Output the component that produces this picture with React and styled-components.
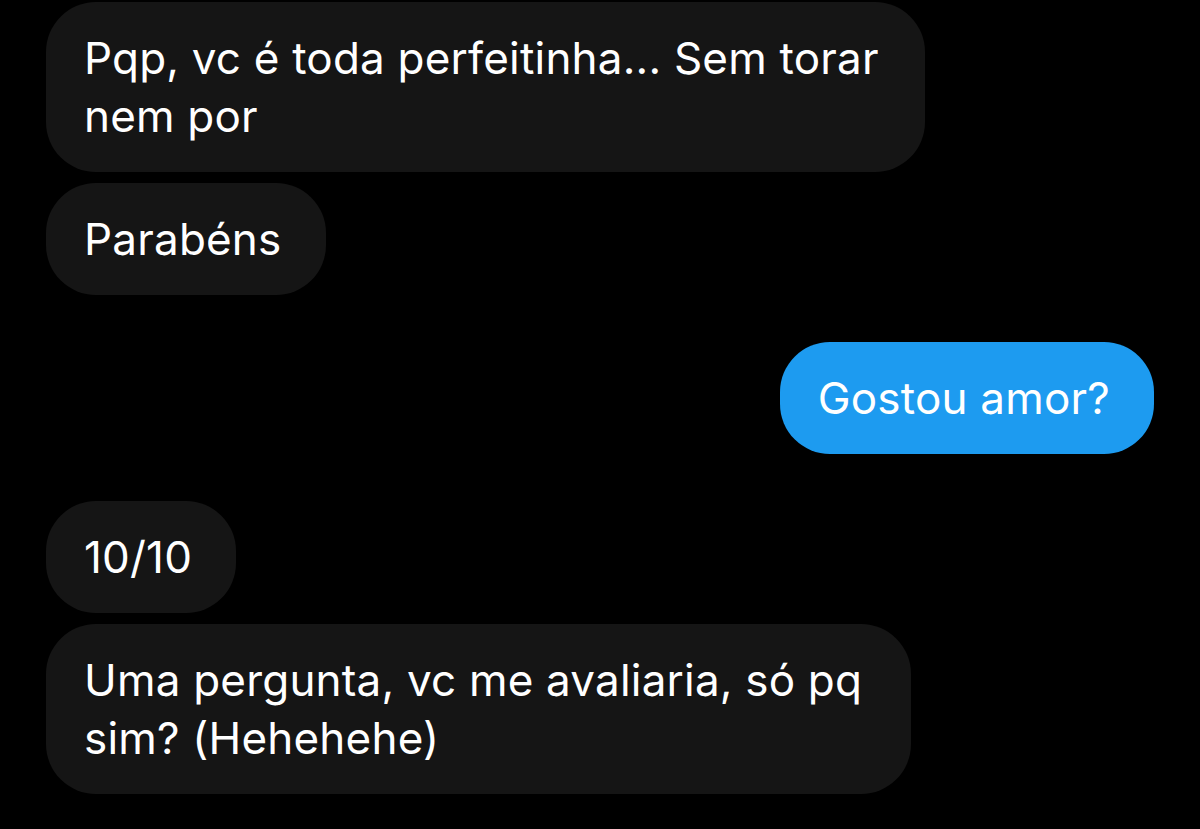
import React from 'react';
import styled, { createGlobalStyle } from 'styled-components';

const GlobalStyle = createGlobalStyle`
  html, body {
    margin: 0;
    padding: 0;
    background: #000;
  }
  body {
    font-family: Inter, 'Liberation Sans', sans-serif;
    -webkit-font-smoothing: antialiased;
  }
`;

const Thread = styled.div`
  display: flex;
  flex-direction: column;
  width: 1200px;
  height: 829px;
  box-sizing: border-box;
  padding: 2px 46px 0 46px;
  background: #000;
  overflow: hidden;
`;

const Group = styled.div`
  display: flex;
  flex-direction: column;
  align-items: ${(p) => (p.$mine ? 'flex-end' : 'flex-start')};
  gap: 11px;
  margin-top: ${(p) => p.$top || 0}px;
`;

const Bubble = styled.div`
  box-sizing: border-box;
  width: ${(p) => (p.$width ? `${p.$width}px` : 'fit-content')};
  padding: 27px 44px 27px 38px;
  border-radius: 50px;
  background: ${(p) => (p.$mine ? '#1d9bf0' : '#151515')};
  color: #fff;
  font-size: 44px;
  line-height: 58px;
  letter-spacing: 0.2px;
  white-space: nowrap;
`;

const messages = [
  {
    mine: false,
    top: 0,
    items: [
      { width: 879, lines: ['Pqp, vc é toda perfeitinha... Sem torar', 'nem por'] },
      { lines: ['Parabéns'] },
    ],
  },
  { mine: true, top: 47, items: [{ lines: ['Gostou amor?'] }] },
  {
    mine: false,
    top: 47,
    items: [
      { lines: ['10/10'] },
      { width: 865, lines: ['Uma pergunta, vc me avaliaria, só pq', 'sim? (Hehehehe)'] },
    ],
  },
];

const App = () => (
  <>
    <GlobalStyle />
    <Thread>
      {messages.map((g, i) => (
        <Group key={i} $mine={g.mine} $top={g.top}>
          {g.items.map((m, j) => (
            <Bubble key={j} $mine={g.mine} $width={m.width}>
              {m.lines.map((l, k) => (
                <div key={k}>{l}</div>
              ))}
            </Bubble>
          ))}
        </Group>
      ))}
    </Thread>
  </>
);

export default App;
